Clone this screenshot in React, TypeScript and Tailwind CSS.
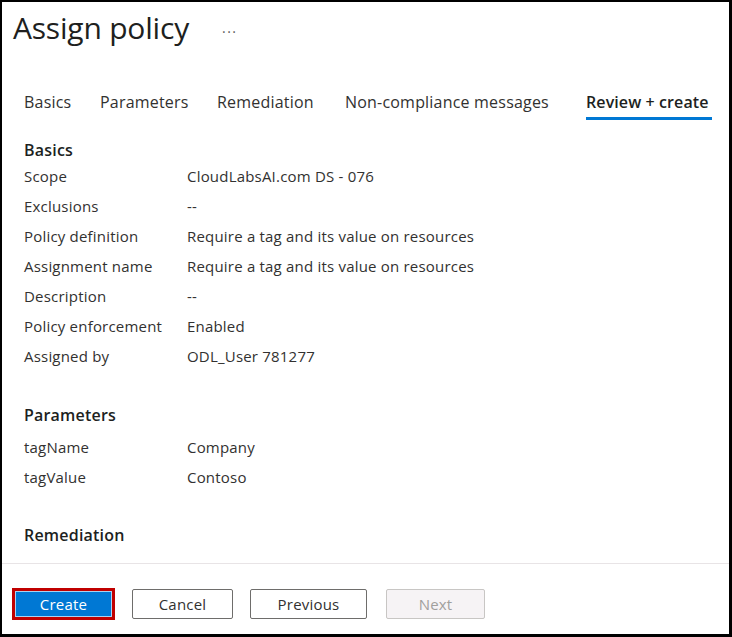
import React from "react";

const rows: [string, string][] = [
  ["Scope", "CloudLabsAI.com DS - 076"],
  ["Exclusions", "--"],
  ["Policy definition", "Require a tag and its value on resources"],
  ["Assignment name", "Require a tag and its value on resources"],
  ["Description", "--"],
  ["Policy enforcement", "Enabled"],
  ["Assigned by", "ODL_User 781277"],
];

const params: [string, string][] = [
  ["tagName", "Company"],
  ["tagValue", "Contoso"],
];

const tabs: { label: string; w: string; active?: boolean }[] = [
  { label: "Basics", w: "w-[76px]" },
  { label: "Parameters", w: "w-[117px]" },
  { label: "Remediation", w: "w-[128px]" },
  { label: "Non-compliance messages", w: "w-[241px]" },
  { label: "Review + create", w: "w-[126px]", active: true },
];

function Row({ k, v }: { k: string; v: string }) {
  return (
    <div className="flex h-[30px] items-center">
      <div className="w-[163px] shrink-0">{k}</div>
      <div>{v}</div>
    </div>
  );
}

export default function App() {
  return (
    <div
      className="w-[732px] h-[637px] bg-white border-l-2 border-t-2 border-r-[3px] border-b-[3px] border-black flex flex-col text-[#323130] overflow-hidden"
      style={{ fontFamily: '"Open Sans", "Noto Sans", sans-serif' }}
    >
      {/* Title */}
      <div className="h-[52px] flex items-center pl-[11px]">
        <h1 className="text-[30px] leading-none text-[#201f1e] tracking-[-0.2px]">Assign policy</h1>
        <span className="ml-[33px] text-[14px] text-[#605e5c] leading-none mt-[0px] tracking-[1.5px]">...</span>
      </div>

      {/* Tabs */}
      <div className="mt-[32px] flex pl-[22px] h-[34px] text-[16px] tracking-[0.2px]">
        {tabs.map((t) => (
          <div key={t.label} className={`${t.w} shrink-0 flex flex-col`}>
            <div className={`h-[32px] flex items-center whitespace-nowrap ${t.active ? "font-semibold text-[#201f1e] tracking-[0.1px]" : "text-[#323130]"}`}>
              {t.label}
            </div>
            {t.active ? <div className="h-[3px] bg-[#0078d4] w-[126px]" /> : null}
          </div>
        ))}
      </div>

      {/* Content */}
      <div className="px-[22px] text-[15px] tracking-[0.2px] pt-[18px]">
        <div className="h-[23px] flex items-center font-semibold text-[16px] text-[#201f1e]">Basics</div>
        {rows.map(([k, v]) => (
          <Row key={k} k={k} v={v} />
        ))}
        <div className="h-[26px]" />
        <div className="h-[35px] flex items-center font-semibold text-[16px] text-[#201f1e]">Parameters</div>
        {params.map(([k, v]) => (
          <Row key={k} k={k} v={v} />
        ))}
        <div className="h-[28px]" />
        <div className="h-[30px] flex items-center font-semibold text-[16px] text-[#201f1e]">Remediation</div>
      </div>

      <div className="flex-1" />

      {/* Footer */}
      <div className="border-t border-[#e8e4e6] h-[71px] flex items-start pt-[24px] pl-[10px] text-[15px] tracking-[0.2px]">
        <div className="border-[3px] border-[#c00000] w-[103px] h-[32px] flex">
          <button className="flex-1 bg-[#0078d4] text-white border border-[#a9d2f2] flex items-center justify-center leading-none">
            Create
          </button>
        </div>
        <button className="ml-[17px] mt-[1px] w-[101px] h-[30px] border border-[#6e6d6b] rounded-[2px] flex items-center justify-center leading-none text-[#323130]">
          Cancel
        </button>
        <button className="ml-[17px] mt-[1px] w-[117px] h-[30px] border border-[#6e6d6b] rounded-[2px] flex items-center justify-center leading-none text-[#323130]">
          Previous
        </button>
        <button className="ml-[19px] mt-[1px] w-[99px] h-[30px] border border-[#c8c6c4] bg-[#f6f3f5] rounded-[2px] flex items-center justify-center leading-none text-[#a19f9d]">
          Next
        </button>
      </div>
    </div>
  );
}
